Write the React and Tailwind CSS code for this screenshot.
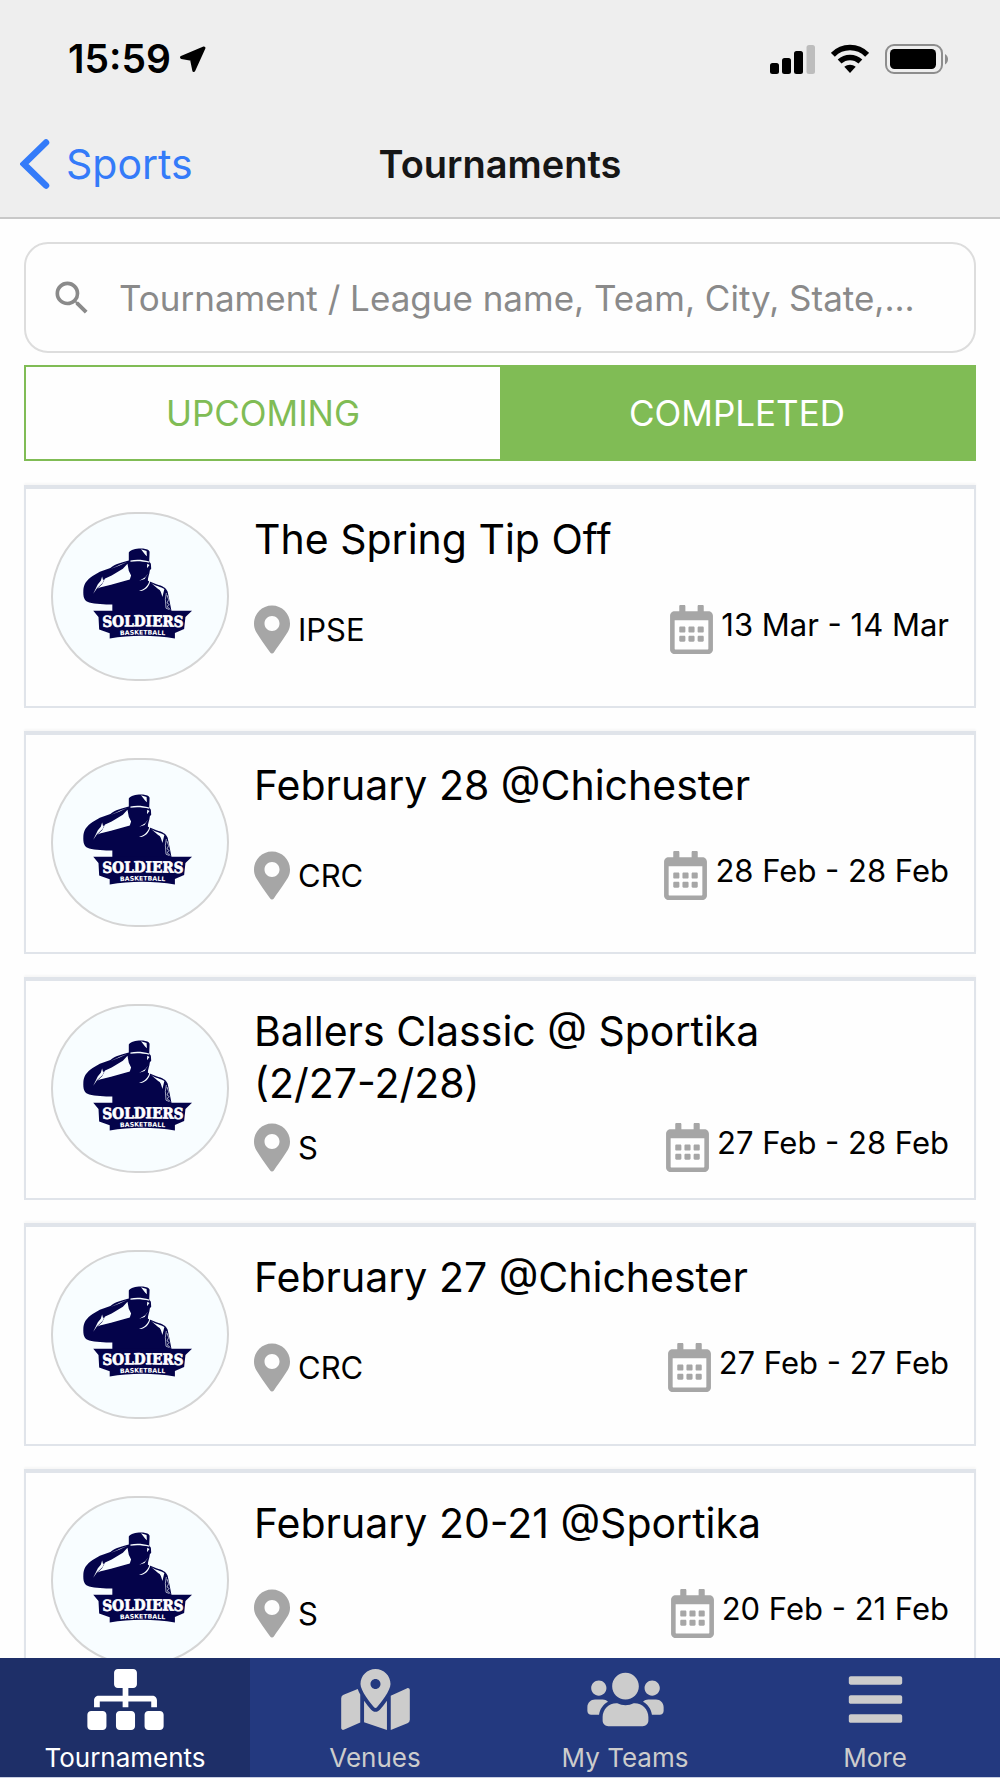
import React, { useState } from "react";
import {
  FaSitemap,
  FaMapMarkedAlt,
  FaUsers,
  FaBars,
  FaMapMarkerAlt,
  FaRegCalendarAlt,
} from "react-icons/fa";
import { MdSearch } from "react-icons/md";

const tournaments = [
  { title: "The Spring Tip Off", place: "IPSE", dates: "13 Mar - 14 Mar" },
  { title: "February 28 @Chichester", place: "CRC", dates: "28 Feb - 28 Feb" },
  { title: "Ballers Classic @ Sportika (2/27-2/28)", place: "S", dates: "27 Feb - 28 Feb" },
  { title: "February 27 @Chichester", place: "CRC", dates: "27 Feb - 27 Feb" },
  { title: "February 20-21 @Sportika", place: "S", dates: "20 Feb - 21 Feb" },
];

const navItems = [
  { label: "Tournaments", Icon: FaSitemap },
  { label: "Venues", Icon: FaMapMarkedAlt },
  { label: "My Teams", Icon: FaUsers },
  { label: "More", Icon: FaBars },
];

function StatusBar() {
  return (
    <div className="flex h-[118px] items-center justify-between pr-[51px] pl-[68px]">
      <div className="flex items-center gap-2">
        <span className="text-[39px] leading-[44px] font-semibold text-black">15:59</span>
        <svg className="h-[27px] w-[27px]" viewBox="0 0 27 27" aria-hidden="true">
          <path
            d="M25 2 2.500 11.500 12.500 13.200 14.800 24.500Z"
            fill="#000"
            stroke="#000"
            strokeWidth="3"
            strokeLinejoin="round"
          />
        </svg>
      </div>
      <div className="flex items-center gap-4">
        <svg className="h-[30px] w-[45px]" viewBox="0 0 45 30" aria-hidden="true">
          <rect x="0" y="19" width="9" height="11" rx="2.500" />
          <rect x="12" y="14" width="9" height="16" rx="2.500" />
          <rect x="24" y="7" width="9" height="23" rx="2.500" />
          <rect x="36.500" y="1" width="8.500" height="29" rx="2.500" fill="#bdbdbd" />
        </svg>
        <svg className="h-[30px] w-[38px]" viewBox="0 0 38 30" aria-hidden="true">
          <g fill="none" stroke="#000" strokeWidth="5.500">
            <path d="M1.900 10.800C11.500 1.200 26.500 1.200 36.100 10.800" />
            <path d="M8.600 17.600C14.500 12 23.500 12 29.400 17.600" />
          </g>
          <path d="M13.300 22.800C16.500 20 21.500 20 24.700 22.800L19 29Z" />
        </svg>
        <svg className="h-[30px] w-[64px]" viewBox="0 0 64 30" aria-hidden="true">
          <rect x="1" y="1" width="56" height="28" rx="8" fill="none" stroke="#8d8d8d" strokeWidth="2" />
          <rect x="5" y="5" width="46" height="20" rx="4.500" />
          <path d="M60 10c4 2 4 8.500 0 10.500z" fill="#8d8d8d" />
        </svg>
      </div>
    </div>
  );
}

function SoldiersLogo() {
  return (
    <svg
      className="h-full w-full"
      viewBox="38 39 528 501"
      role="img"
      aria-label="Soldiers Basketball"
    >
      <g fill="#04034a">
        <path d="M268 156C275 145 300 142 318 145 328 147 333 151 331 158L330 183 335 190 336 205 332 210C331 222 325 233 326 242L352 252C370 257 382 263 386 275L392 305 398 335H218V314C195 314 165 313 148 308 132 303 129 292 130 270 131 252 140 239 158 227L180 214 212 203C228 190 245 186 268 180Z" />
        <path d="M160 333H460L440 352 436 388 408 400V417C345 406 272 406 210 417V401L178 390 176 352Z" />
      </g>
      <g fill="#f8fdff">
        <path d="M264 190 250 205 216 226 196 235 187 252 172 266 180 262 214 254 271 238 275 226 268 211Z" />
        <path d="M187 229 183 242 174 252 160 281 172 264 188 249 195 235 190 240Z" />
        <path d="M273 180C290 176 310 177 330 183L330 187C310 182 290 181 273 184Z" />
        <path d="M327 219 318 231 300 242 316 236ZM330 242C328 258 314 268 299 273 316 273 330 261 333 243Z" />
        <path d="M335 248C350 259 365 260 376 267L370 291C366 278 365 270 357 267Z" />
        <path d="M305 146 322 151 323 167 318 163ZM324 190 331 194 323 204Z" />
        <path d="M213 206 240 195 263 185 243 192Z" />
      </g>
      <g fill="none" stroke="#f8fdff" strokeWidth="2">
        <path d="M382 279 379 298 381 325 391 329M384 285 389 299 384 309 391 314 384 320 394 329" />
      </g>
      <path id="soldiers-line" d="M164 383Q310 377 458 383" fill="none" />
      <path id="basketball-line" d="M196 411Q310 399 424 411" fill="none" />
      <text
        fill="#fff"
        stroke="#fff"
        strokeWidth="2"
        textAnchor="middle"
        className="font-['DejaVu_Serif_Condensed','DejaVu_Serif',serif] text-[46px] font-bold"
      >
        <textPath href="#soldiers-line" startOffset="50%">SOLDIERS</textPath>
      </text>
      <text
        fill="#fff"
        textAnchor="middle"
        className="font-['DejaVu_Sans',sans-serif] text-[19px] font-bold"
      >
        <textPath href="#basketball-line" startOffset="50%">BASKETBALL</textPath>
      </text>
    </svg>
  );
}

function TournamentCard({ title, place, dates }) {
  return (
    <li className="flex min-h-[223px] shrink-0 items-start gap-[25px] border-2 border-t-4 border-[#e0e4ea] pt-[23px] pr-[25px] pb-4 pl-[25px] shadow-[0_-2px_2px_rgba(0,0,0,0.03)]">
      <div className="h-[169px] w-[178px] shrink-0 overflow-hidden rounded-full border-2 border-[#d5d5d5] bg-[#f8fdff]">
        <SoldiersLogo />
      </div>
      <div className="min-w-0 flex-1 pt-px">
        <h2 className="min-h-[78px] max-w-[560px] text-[41px] leading-[52px] text-black">{title}</h2>
        <div className="mt-3.5 flex items-start justify-between">
          <div className="flex items-center gap-2">
            <FaMapMarkerAlt className="h-[49px] w-9 text-[#a6a6a6]" aria-hidden="true" />
            <span className="text-[31px] leading-[48px] text-black">{place}</span>
          </div>
          <div className="flex items-start gap-2">
            <FaRegCalendarAlt className="h-[49px] w-[43px] text-[#a6a6a6]" aria-hidden="true" />
            <span className="text-[31px] leading-[40px] text-black">{dates}</span>
          </div>
        </div>
      </div>
    </li>
  );
}

export default function App() {
  const [tab, setTab] = useState("COMPLETED");
  const [page, setPage] = useState("Tournaments");

  return (
    <div className="flex h-screen flex-col overflow-hidden bg-[#fefefe] font-['Inter','Liberation_Sans',sans-serif]">
      <header className="shrink-0 border-b-2 border-[#c8c8c8] bg-[#eeeeee]">
        <StatusBar />
        <div className="grid h-[99px] grid-cols-[1fr_auto_1fr] items-center px-5 pb-2">
          <a href="#sports" className="flex items-center gap-4 justify-self-start text-[#347bf9]">
            <svg className="h-[50px] w-[30px]" viewBox="0 0 30 50" aria-hidden="true">
              <path
                d="M26 3.500 4 25 26 46.500"
                fill="none"
                stroke="currentColor"
                strokeWidth="6.500"
                strokeLinecap="round"
              />
            </svg>
            <span className="text-[41px] leading-[50px]">Sports</span>
          </a>
          <h1 className="text-[38px] leading-[50px] font-semibold text-[#161616]">Tournaments</h1>
        </div>
      </header>

      <main className="flex min-h-0 flex-1 flex-col overflow-hidden px-6 pt-[23px]">
        <label className="flex h-[111px] shrink-0 items-center gap-[25px] rounded-3xl border-2 border-[#dddddd] px-6">
          <MdSearch className="h-11 w-11 shrink-0 text-[#8a8a8a]" aria-hidden="true" />
          <input
            type="search"
            aria-label="Search tournaments"
            placeholder="Tournament / League name, Team, City, State,..."
            className="min-w-0 flex-1 bg-transparent text-[35px] leading-[44px] outline-none placeholder:text-[#8a8a8a]"
          />
        </label>

        <div className="mt-3 grid h-24 shrink-0 grid-cols-2 border-2 border-[#80bc55]">
          {["UPCOMING", "COMPLETED"].map((name) => (
            <button
              key={name}
              type="button"
              aria-pressed={tab === name}
              onClick={() => setTab(name)}
              className={
                tab === name
                  ? "bg-[#80bc55] text-[35px] leading-[44px] text-white"
                  : "bg-[#fefefe] text-[35px] leading-[44px] text-[#80bc55]"
              }
            >
              {name}
            </button>
          ))}
        </div>

        <ul className="mt-6 flex flex-col gap-[23px]">
          {tournaments.map((t) => (
            <TournamentCard key={t.title} {...t} />
          ))}
        </ul>
      </main>

      <nav className="grid shrink-0 grid-cols-4 border-b border-[#c9cfe2] bg-[#23397f]">
        {navItems.map(({ label, Icon }) => (
          <button
            key={label}
            type="button"
            onClick={() => setPage(label)}
            className={
              page === label
                ? "flex h-[119px] flex-col items-center bg-[#1e2f68] pt-[11px] text-white"
                : "flex h-[119px] flex-col items-center pt-[11px] text-[#cccccc]"
            }
          >
            <Icon className="h-[61px] w-[77px]" aria-hidden="true" />
            <span className="mt-3 text-[26px] leading-[32px]">{label}</span>
          </button>
        ))}
      </nav>
    </div>
  );
}
